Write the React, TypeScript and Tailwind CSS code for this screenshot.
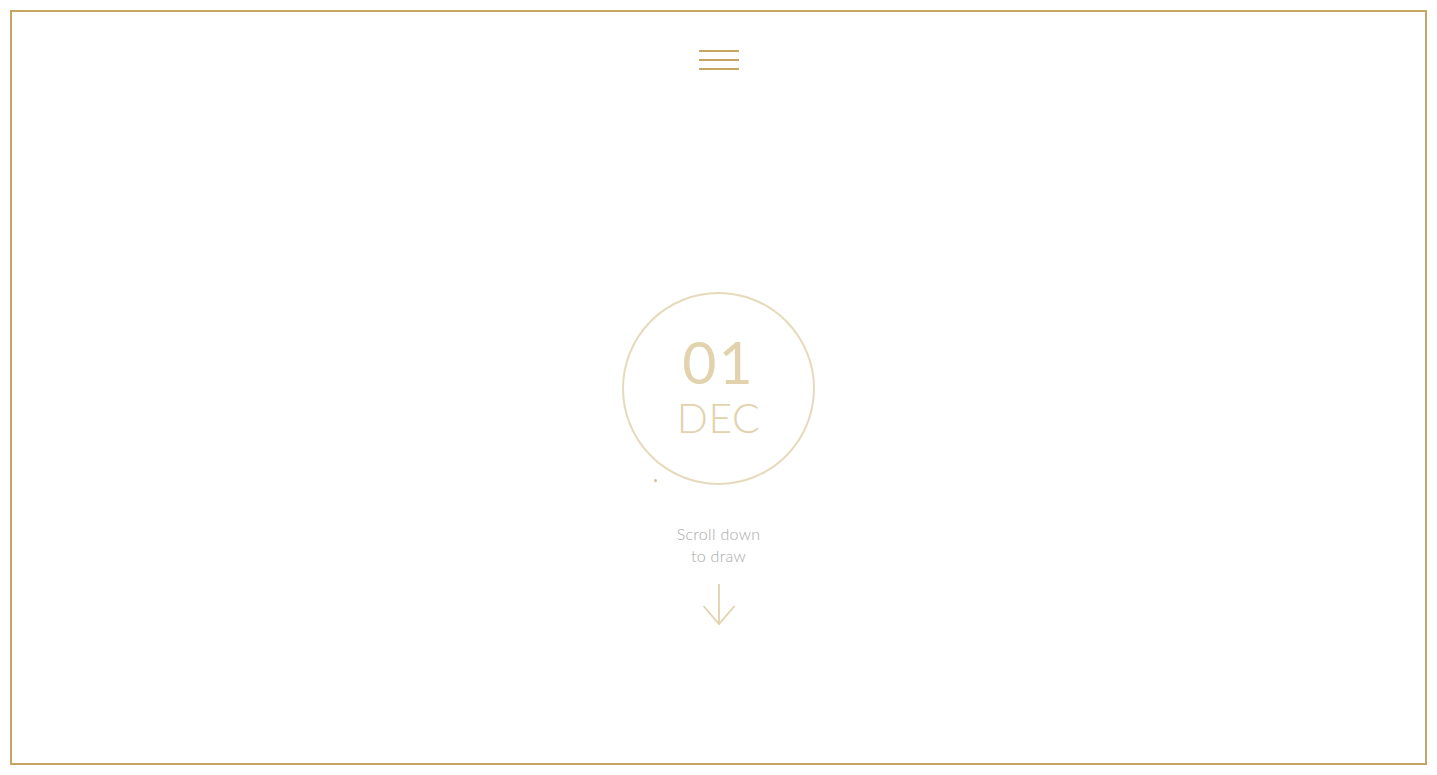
export default function App() {
  return (
    <div className="h-screen w-full bg-white p-[10px]" style={{ fontFamily: "Lato, 'Open Sans', sans-serif" }}>
      <div className="flex h-full w-full flex-col items-center border-2 border-[#c4a563]">
        {/* Menu toggle */}
        <button className="mt-[38px] flex w-[40px] flex-col gap-[7px]">
          <span className="block h-[2px] w-full bg-[#c4a563]" />
          <span className="block h-[2px] w-full bg-[#c4a563]" />
          <span className="block h-[2px] w-full bg-[#c4a563]" />
        </button>

        {/* Date badge */}
        <div className="relative mt-[222px] flex h-[193px] w-[193px] flex-col items-center justify-center rounded-full border-2 border-[#e6d9bc] text-[#e2d2ad]">
          <span className="mt-[-2px] block text-[59px] font-normal leading-[48px] tracking-[2px]">01</span>
          <span className="mt-[12px] block text-[41px] font-light leading-[40px] tracking-[0.5px]">DEC</span>
          <span className="absolute left-[30px] top-[185px] h-[3px] w-[3px] rounded-full bg-[#d2bd92]" />
        </div>

        {/* Scroll hint */}
        <p className="mt-[38px] text-center text-[16px] font-light leading-[22px] tracking-[0.3px] text-[#a8a8a8]">
          Scroll down
          <br />
          to draw
        </p>
        <svg className="mt-[16px]" width="36" height="44" viewBox="0 0 36 44" fill="none">
          <path d="M18 1 V41 M2.5 23 L18 41 L33.5 23" stroke="#e2d2ad" strokeWidth="1.8" />
        </svg>
      </div>
    </div>
  );
}
